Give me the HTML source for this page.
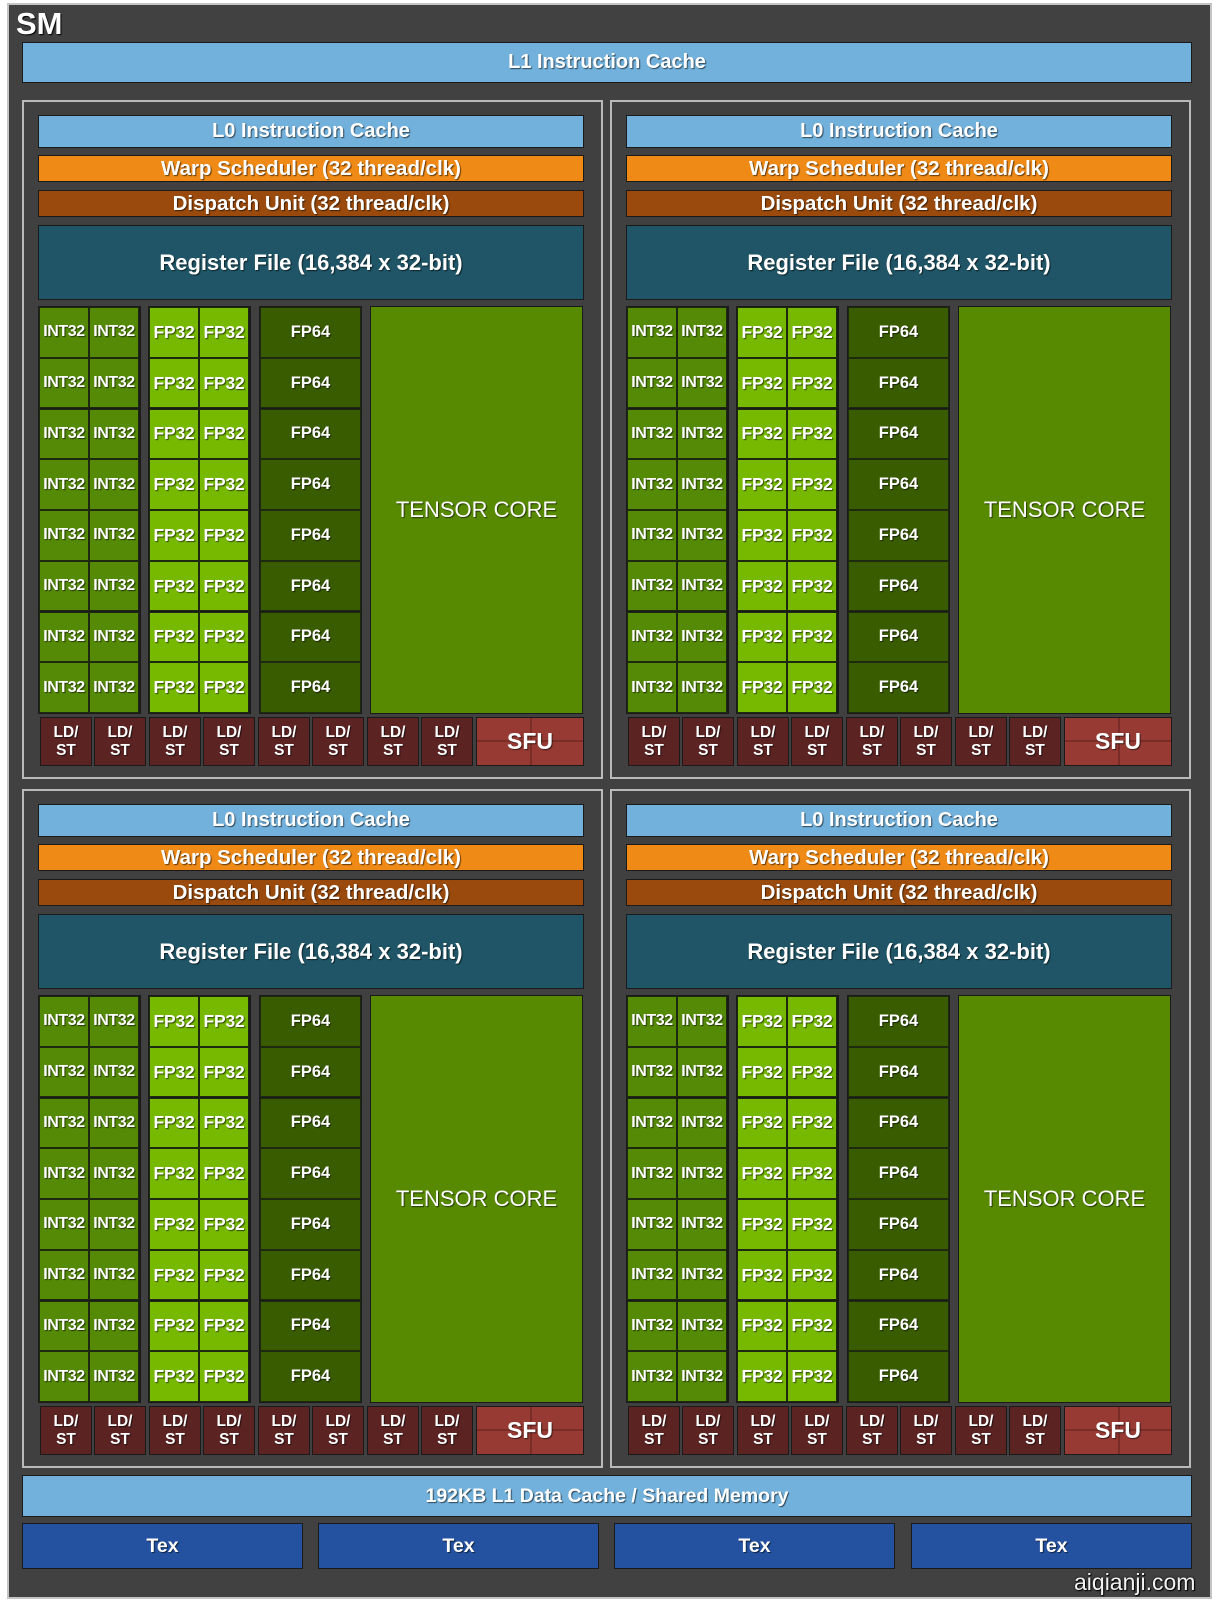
<!DOCTYPE html>
<html><head><meta charset="utf-8"><style>
*{margin:0;padding:0;box-sizing:border-box}
body{width:1212px;height:1600px;background:#fff;position:relative;overflow:hidden;font-family:"Liberation Sans",sans-serif;font-weight:bold;color:#fff}
.a{position:absolute}
.t{display:flex;align-items:center;justify-content:center;text-shadow:1px 1px 1px rgba(0,0,0,.6);border:1.5px solid #1a1a1a;white-space:nowrap}
#outer{left:7px;top:3px;width:1205px;height:1596px;background:#414141;border:2px solid #c4c4c4}
.q{width:581px;height:679px;background:#404040;border:2px solid #b9b9b9}
.l0{left:14px;top:13px;width:546px;height:33px;background:#72b1dc;font-size:20px}
.wp{left:14px;top:53px;width:546px;height:27px;background:#f08a17;font-size:20.5px}
.dp{left:14px;top:88px;width:546px;height:27px;background:#994a0c;font-size:20.5px}
.rg{left:14px;top:123px;width:546px;height:75px;background:#1f5566;font-size:22px}
.col{top:204px;width:103px;height:408px;border:1.5px solid #1a1a1a;display:flex;flex-wrap:wrap;background:#1a1a1a}
.col div{display:flex;align-items:center;justify-content:center;text-shadow:1px 1px 1px rgba(0,0,0,.6);height:50.6px;border:1px solid #1e2a10;white-space:nowrap}
.int div{width:50px;background:#548a06;font-size:16px;letter-spacing:-0.4px}
.fp div{width:50px;background:#76b900;font-size:17.5px;letter-spacing:-0.2px}
.f64 div{width:100%;background:#3a5c00;font-size:16.5px}
.ten{left:346px;top:204px;width:213px;height:408px;background:#578a00;font-size:22px;font-weight:normal}
.ls{top:615px;width:52px;height:49px;background:#5c2323;font-size:15.5px;line-height:18px;text-align:center}
.sfu{left:452px;top:615px;width:108px;height:49px;background:#963a33;font-size:23px;overflow:hidden}
.sfu:before{content:"";position:absolute;left:53px;top:0;width:2px;height:100%;background:#7a2c27}
.sfu:after{content:"";position:absolute;left:0;top:22px;width:100%;height:2px;background:#7a2c27}
.sfu span{position:relative;z-index:1}
.tex{top:1523px;width:281px;height:46px;background:#2552a0;font-size:19.5px}
</style></head><body>
<div id="outer" class="a"></div>
<div class="a" style="left:16px;top:6px;font-size:31px;text-shadow:1px 1px 1px #000">SM</div>
<div class="a t" style="left:22px;top:42px;width:1170px;height:41px;background:#72b1dc;font-size:20px">L1 Instruction Cache</div>

<div class="a q" style="left:22px;top:100px">
<div class="a t l0">L0 Instruction Cache</div>
<div class="a t wp">Warp Scheduler (32 thread/clk)</div>
<div class="a t dp">Dispatch Unit (32 thread/clk)</div>
<div class="a t rg">Register File (16,384 x 32-bit)</div>
<div class="a col int" style="left:14px"><div>INT32</div><div>INT32</div><div>INT32</div><div>INT32</div><div>INT32</div><div>INT32</div><div>INT32</div><div>INT32</div><div>INT32</div><div>INT32</div><div>INT32</div><div>INT32</div><div>INT32</div><div>INT32</div><div>INT32</div><div>INT32</div></div>
<div class="a col fp" style="left:124px"><div>FP32</div><div>FP32</div><div>FP32</div><div>FP32</div><div>FP32</div><div>FP32</div><div>FP32</div><div>FP32</div><div>FP32</div><div>FP32</div><div>FP32</div><div>FP32</div><div>FP32</div><div>FP32</div><div>FP32</div><div>FP32</div></div>
<div class="a col f64" style="left:235px"><div>FP64</div><div>FP64</div><div>FP64</div><div>FP64</div><div>FP64</div><div>FP64</div><div>FP64</div><div>FP64</div></div>
<div class="a t ten">TENSOR CORE</div>
<div class="a t ls" style="left:16px">LD/<br>ST</div><div class="a t ls" style="left:70px">LD/<br>ST</div><div class="a t ls" style="left:125px">LD/<br>ST</div><div class="a t ls" style="left:179px">LD/<br>ST</div><div class="a t ls" style="left:234px">LD/<br>ST</div><div class="a t ls" style="left:288px">LD/<br>ST</div><div class="a t ls" style="left:343px">LD/<br>ST</div><div class="a t ls" style="left:397px">LD/<br>ST</div>
<div class="a t sfu"><span>SFU</span></div>
</div>

<div class="a q" style="left:610px;top:100px">
<div class="a t l0">L0 Instruction Cache</div>
<div class="a t wp">Warp Scheduler (32 thread/clk)</div>
<div class="a t dp">Dispatch Unit (32 thread/clk)</div>
<div class="a t rg">Register File (16,384 x 32-bit)</div>
<div class="a col int" style="left:14px"><div>INT32</div><div>INT32</div><div>INT32</div><div>INT32</div><div>INT32</div><div>INT32</div><div>INT32</div><div>INT32</div><div>INT32</div><div>INT32</div><div>INT32</div><div>INT32</div><div>INT32</div><div>INT32</div><div>INT32</div><div>INT32</div></div>
<div class="a col fp" style="left:124px"><div>FP32</div><div>FP32</div><div>FP32</div><div>FP32</div><div>FP32</div><div>FP32</div><div>FP32</div><div>FP32</div><div>FP32</div><div>FP32</div><div>FP32</div><div>FP32</div><div>FP32</div><div>FP32</div><div>FP32</div><div>FP32</div></div>
<div class="a col f64" style="left:235px"><div>FP64</div><div>FP64</div><div>FP64</div><div>FP64</div><div>FP64</div><div>FP64</div><div>FP64</div><div>FP64</div></div>
<div class="a t ten">TENSOR CORE</div>
<div class="a t ls" style="left:16px">LD/<br>ST</div><div class="a t ls" style="left:70px">LD/<br>ST</div><div class="a t ls" style="left:125px">LD/<br>ST</div><div class="a t ls" style="left:179px">LD/<br>ST</div><div class="a t ls" style="left:234px">LD/<br>ST</div><div class="a t ls" style="left:288px">LD/<br>ST</div><div class="a t ls" style="left:343px">LD/<br>ST</div><div class="a t ls" style="left:397px">LD/<br>ST</div>
<div class="a t sfu"><span>SFU</span></div>
</div>

<div class="a q" style="left:22px;top:789px">
<div class="a t l0">L0 Instruction Cache</div>
<div class="a t wp">Warp Scheduler (32 thread/clk)</div>
<div class="a t dp">Dispatch Unit (32 thread/clk)</div>
<div class="a t rg">Register File (16,384 x 32-bit)</div>
<div class="a col int" style="left:14px"><div>INT32</div><div>INT32</div><div>INT32</div><div>INT32</div><div>INT32</div><div>INT32</div><div>INT32</div><div>INT32</div><div>INT32</div><div>INT32</div><div>INT32</div><div>INT32</div><div>INT32</div><div>INT32</div><div>INT32</div><div>INT32</div></div>
<div class="a col fp" style="left:124px"><div>FP32</div><div>FP32</div><div>FP32</div><div>FP32</div><div>FP32</div><div>FP32</div><div>FP32</div><div>FP32</div><div>FP32</div><div>FP32</div><div>FP32</div><div>FP32</div><div>FP32</div><div>FP32</div><div>FP32</div><div>FP32</div></div>
<div class="a col f64" style="left:235px"><div>FP64</div><div>FP64</div><div>FP64</div><div>FP64</div><div>FP64</div><div>FP64</div><div>FP64</div><div>FP64</div></div>
<div class="a t ten">TENSOR CORE</div>
<div class="a t ls" style="left:16px">LD/<br>ST</div><div class="a t ls" style="left:70px">LD/<br>ST</div><div class="a t ls" style="left:125px">LD/<br>ST</div><div class="a t ls" style="left:179px">LD/<br>ST</div><div class="a t ls" style="left:234px">LD/<br>ST</div><div class="a t ls" style="left:288px">LD/<br>ST</div><div class="a t ls" style="left:343px">LD/<br>ST</div><div class="a t ls" style="left:397px">LD/<br>ST</div>
<div class="a t sfu"><span>SFU</span></div>
</div>

<div class="a q" style="left:610px;top:789px">
<div class="a t l0">L0 Instruction Cache</div>
<div class="a t wp">Warp Scheduler (32 thread/clk)</div>
<div class="a t dp">Dispatch Unit (32 thread/clk)</div>
<div class="a t rg">Register File (16,384 x 32-bit)</div>
<div class="a col int" style="left:14px"><div>INT32</div><div>INT32</div><div>INT32</div><div>INT32</div><div>INT32</div><div>INT32</div><div>INT32</div><div>INT32</div><div>INT32</div><div>INT32</div><div>INT32</div><div>INT32</div><div>INT32</div><div>INT32</div><div>INT32</div><div>INT32</div></div>
<div class="a col fp" style="left:124px"><div>FP32</div><div>FP32</div><div>FP32</div><div>FP32</div><div>FP32</div><div>FP32</div><div>FP32</div><div>FP32</div><div>FP32</div><div>FP32</div><div>FP32</div><div>FP32</div><div>FP32</div><div>FP32</div><div>FP32</div><div>FP32</div></div>
<div class="a col f64" style="left:235px"><div>FP64</div><div>FP64</div><div>FP64</div><div>FP64</div><div>FP64</div><div>FP64</div><div>FP64</div><div>FP64</div></div>
<div class="a t ten">TENSOR CORE</div>
<div class="a t ls" style="left:16px">LD/<br>ST</div><div class="a t ls" style="left:70px">LD/<br>ST</div><div class="a t ls" style="left:125px">LD/<br>ST</div><div class="a t ls" style="left:179px">LD/<br>ST</div><div class="a t ls" style="left:234px">LD/<br>ST</div><div class="a t ls" style="left:288px">LD/<br>ST</div><div class="a t ls" style="left:343px">LD/<br>ST</div><div class="a t ls" style="left:397px">LD/<br>ST</div>
<div class="a t sfu"><span>SFU</span></div>
</div>

<div class="a t" style="left:22px;top:1475px;width:1170px;height:42px;background:#72b1dc;font-size:19.5px">192KB L1 Data Cache / Shared Memory</div>
<div class="a t tex" style="left:22px">Tex</div>
<div class="a t tex" style="left:318px">Tex</div>
<div class="a t tex" style="left:614px">Tex</div>
<div class="a t tex" style="left:911px">Tex</div>
<div class="a" style="left:1074px;top:1569px;font-size:23px;font-weight:normal;color:#f2f2f2;text-shadow:0 0 2px #000,1px 1px 1px #000">aiqianji.com</div>
</body></html>
